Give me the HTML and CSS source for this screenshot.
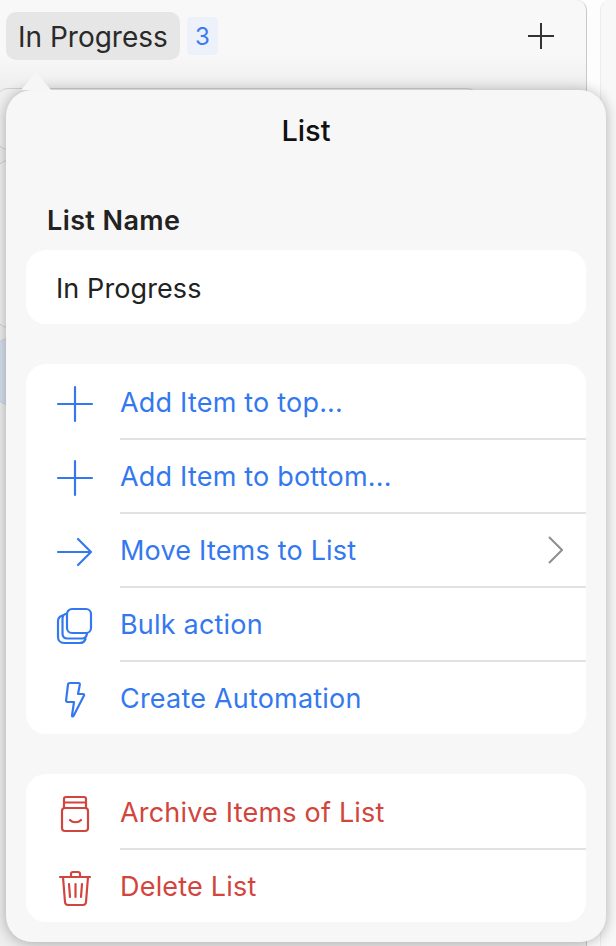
FILE: index.html
```html
<!DOCTYPE html>
<html lang="en">
<head>
  <meta charset="UTF-8" />
  <title>List</title>
  <link rel="stylesheet" href="styles.css">
</head>
<body>
  <div class="board">
    <div class="column">
      <div class="column-head">
        <div class="column-name">In Progress</div>
        <div class="column-count">3</div>
        <svg class="column-add" width="28" height="28" viewBox="0 0 28 28"><path d="M14 1v26M1 14h26" /></svg>
      </div>
      <div class="card"></div>
      <div class="card card-tall"></div>
      <div class="card card-blue"></div>
    </div>
    <div class="column-next"></div>
  </div>

  <div class="popover">
    <div class="arrow"></div>
    <h3>List</h3>

    <label class="field-label" for="listName">List Name</label>
    <input class="field" type="text" id="listName" value="In Progress" />

    <div class="group">
      <div class="row">
        <svg class="icon" viewBox="0 -3 36 36"><path d="M18 1v34M1 18h34" /></svg>
        <div class="row-text">Add Item to top...</div>
      </div>
      <div class="row">
        <svg class="icon" viewBox="0 -3 36 36"><path d="M18 1v34M1 18h34" /></svg>
        <div class="row-text">Add Item to bottom...</div>
      </div>
      <div class="row">
        <svg class="icon" viewBox="0 -3 36 36"><path d="M1 18h33M21 5l13 13-13 13" /></svg>
        <div class="row-text">Move Items to List</div>
        <svg class="chevron" width="16" height="28" viewBox="0 0 16 28"><path d="M2 1l13 13L2 27" /></svg>
      </div>
      <div class="row">
        <svg class="icon" viewBox="0 -3 36 36"><rect x="10" y="1" width="24" height="24" rx="5" /><path d="M10 5.500C7 6 5.500 8 5.500 10.500v15c0 3 2 5 5 5h15c2.500 0 4-1.500 4.500-5" /><path d="M5.500 7.500C2.500 8.500 1 10.500 1 13v16c0 3.500 2.500 6 6 6h16c2.500 0 4.500-1.500 5.500-4" /></svg>
        <div class="row-text">Bulk action</div>
      </div>
      <div class="row">
        <svg class="icon" viewBox="0 -3 36 36"><path d="M13 1h8.500c1 0 1.500.7 1.300 1.700L21 12h5c1 0 1.400.8 1 1.600L16.500 34c-.6.9-1.700.4-1.500-.6L17 20h-6.500c-1 0-1.500-.6-1.400-1.600L11 2.500C11.100 1.500 12 1 13 1z" /></svg>
        <div class="row-text">Create Automation</div>
      </div>
    </div>

    <div class="group">
      <div class="row danger">
        <svg class="icon" viewBox="0 -3 36 36"><path d="M7 12V3c0-1.200.8-2 2-2h18c1.200 0 2 .8 2 2v9M7 6.500h22" /><rect x="5" y="12" width="26" height="23" rx="3" /><path d="M13 24c2.500 3 8.500 3 11 0" /></svg>
        <div class="row-text">Archive Items of List</div>
      </div>
      <div class="row danger">
        <svg class="icon" viewBox="0 -3 36 36"><path d="M3 7h30M14 7V4c0-1.200.8-2 2-2h5c1.200 0 2 .8 2 2v3" /><path d="M6 7l2 25c.2 2 1.300 3 3 3h15c1.700 0 2.800-1 3-3l2-25" /><path d="M12 14l1 13M18.500 14v13M25 14l-1 13" /></svg>
        <div class="row-text">Delete List</div>
      </div>
    </div>
  </div>
</body>
</html>
```

FILE: styles.css
```css
body {
  font-family: Inter, "Liberation Sans", sans-serif;
  margin: 0;
  padding: 0;
  width: 616px;
  height: 946px;
  overflow: hidden;
  background: #fff;
  color: #222;
}

.board {
  display: flex;
  gap: 13px;
  height: 946px;
  background: #fdfdfd;
}

.column {
  width: 586px;
  flex: none;
  overflow: hidden;
  background: linear-gradient(#f8f8f8 55px, #eeeeee 90px);
  border-right: 1px solid #c9c9c9;
  border-top-right-radius: 10px;
}

.column-next {
  flex: 1;
  background: #f8f8f8;
  border-left: 1px solid #ececec;
  border-top-left-radius: 10px;
}

.column-head {
  display: flex;
  align-items: center;
  height: 48px;
  margin-top: 12px;
  padding-left: 6px;
}

.column-name {
  background: #e6e6e6;
  border-radius: 10px;
  height: 48px;
  line-height: 50px;
  padding: 0 12px;
  font-size: 28px;
  color: #2a2a2a;
}

.column-count {
  background: #edf1fa;
  border-radius: 4px;
  width: 31px;
  height: 38px;
  line-height: 40px;
  margin-left: 7px;
  text-align: center;
  font-size: 24px;
  color: #3b7bf0;
}

.column-add {
  margin-left: auto;
  margin-right: 31px;
  fill: none;
  stroke: #333;
  stroke-width: 2;
}

.card {
  height: 62px;
  width: 483px;
  margin: 28px 0 0 -4px;
  box-sizing: border-box;
  background: #f0f0f0;
  border: 1px solid #d0d0d0;
  border-radius: 12px;
}

.card-tall {
  height: 168px;
  margin-top: 10px;
}

.card-blue {
  height: 67px;
  margin-top: 10px;
  background: #d6e0ee;
  border-color: #c8d2e0;
}

.popover {
  position: absolute;
  left: 6px;
  top: 90px;
  width: 560px;
  height: 812px;
  padding: 20px;
  background: #f7f7f7;
  border-radius: 26px;
  box-shadow: 0 1px 14px rgba(0, 0, 0, 0.3);
  display: flex;
  flex-direction: column;
}

.arrow {
  position: absolute;
  left: 15px;
  top: -18px;
  width: 0;
  height: 0;
  border-left: 15px solid transparent;
  border-right: 15px solid transparent;
  border-bottom: 18px solid #f6f6f6;
}

h3 {
  margin: 0;
  height: 42px;
  line-height: 42px;
  text-align: center;
  font-size: 29px;
  font-weight: 500;
  color: #111;
}

.field-label {
  display: block;
  margin: 51px 0 0 21px;
  height: 36px;
  line-height: 36px;
  font-size: 27px;
  font-weight: 600;
  letter-spacing: 0.4px;
}

.field {
  display: block;
  box-sizing: border-box;
  width: 560px;
  height: 74px;
  margin-top: 11px;
  padding: 2px 30px 0;
  border: none;
  border-radius: 20px;
  background: #fff;
  font-family: inherit;
  font-size: 27px;
  letter-spacing: 0.1px;
  color: #222;
}

.group {
  margin-top: 40px;
  background: #fff;
  border-radius: 20px;
  overflow: hidden;
}

.row {
  display: flex;
  align-items: center;
  box-sizing: border-box;
  height: 74px;
  padding-top: 2px;
  color: #3478f0;
}

.row.danger {
  color: #d2453d;
}

.icon {
  flex: none;
  width: 36px;
  height: 36px;
  margin: -2px 27px 0 31px;
  overflow: visible;
  fill: none;
  stroke: currentColor;
  stroke-width: 2.2;
  stroke-linecap: round;
  stroke-linejoin: round;
}

.row-text {
  flex: 1;
  font-size: 27px;
  letter-spacing: 0.2px;
}

.chevron {
  flex: none;
  margin-right: 23px;
  fill: none;
  stroke: #8e8e8e;
  stroke-width: 2;
}

.row + .row {
  position: relative;
}

.row + .row::before {
  content: "";
  position: absolute;
  left: 94px;
  right: 0;
  top: 0;
  height: 2px;
  background: #e2e2e2;
}
```
